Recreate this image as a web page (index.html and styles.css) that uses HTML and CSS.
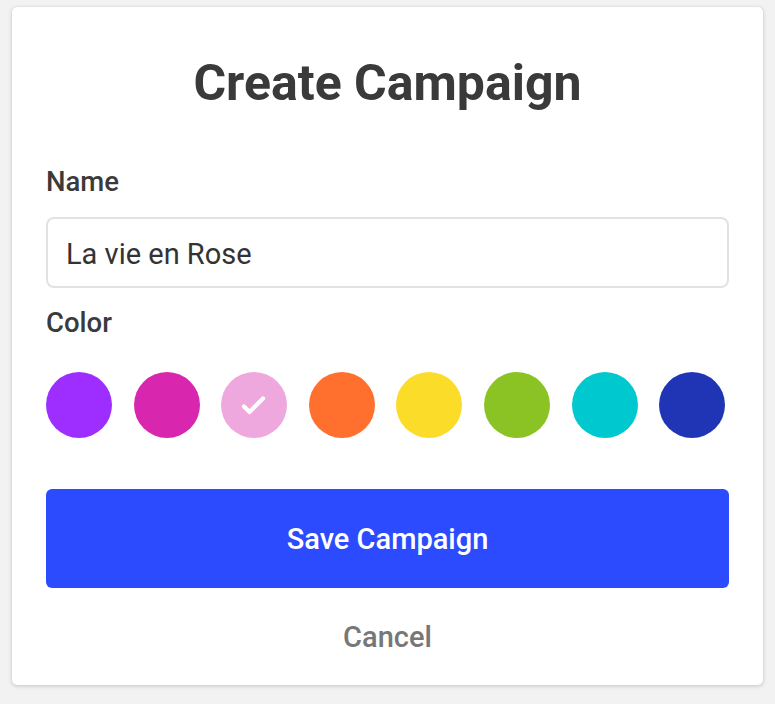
FILE: index.html
```html
<!DOCTYPE html>
<html>
<head>
<meta charset="utf-8">
<link rel="stylesheet" href="styles.css">
</head>
<body>
<div class="card">
  <h1 class="title">Create Campaign</h1>
  <label class="label label-name">Name</label>
  <div class="input">La vie en Rose</div>
  <div class="label label-color">Color</div>
  <div class="swatches">
    <span class="swatch c1"></span>
    <span class="swatch c2"></span>
    <span class="swatch c3">
      <svg class="check" width="66" height="66" viewBox="0 0 66 66"><path d="M23 34.5 L28.5 40 L42 26.5" fill="none" stroke="#fff" stroke-width="4.2" stroke-linecap="round" stroke-linejoin="round"/></svg>
    </span>
    <span class="swatch c4"></span>
    <span class="swatch c5"></span>
    <span class="swatch c6"></span>
    <span class="swatch c7"></span>
    <span class="swatch c8"></span>
  </div>
  <button class="save">Save Campaign</button>
  <div class="cancel">Cancel</div>
</div>
</body>
</html>
```

FILE: styles.css
```css
html, body {
  margin: 0;
  padding: 0;
}
body {
  background: #f2f2f2;
  font-family: Roboto, "Liberation Sans", sans-serif;
  width: 775px;
  height: 704px;
  padding: 7px 0 0 12px;
  box-sizing: border-box;
}
.card {
  width: 751px;
  height: 678px;
  box-sizing: border-box;
  background: #fff;
  border-radius: 5px;
  box-shadow: 0 1px 4px rgba(0,0,0,0.18), 0 0 1px rgba(0,0,0,0.12);
  padding: 46px 34px 0 34px;
  display: flex;
  flex-direction: column;
}
.title {
  margin: 0;
  font-size: 50px;
  line-height: 60px;
  font-weight: 700;
  color: #3a3a3a;
  text-align: center;
}
.label {
  display: block;
  font-size: 27.5px;
  line-height: 30px;
  font-weight: 500;
  color: #3a3a3a;
}
.label-name {
  margin-top: 54px;
}
.input {
  margin-top: 20px;
  height: 71px;
  box-sizing: border-box;
  border: 2px solid #e2e2e2;
  border-radius: 8px;
  padding: 0 18px;
  display: flex;
  align-items: center;
  font-size: 29px;
  color: #333;
  padding-top: 3px;
}
.label-color {
  margin-top: 20px;
}
.swatches {
  margin-top: 34px;
  display: flex;
  gap: 21.6px;
}
.swatch {
  width: 66px;
  height: 66px;
  border-radius: 50%;
  display: block;
  flex: none;
}
.check { display: block; }
.c1 { background: #9d2eff; }
.c2 { background: #d926ae; }
.c3 { background: #efa8dd; }
.c4 { background: #ff6f2e; }
.c5 { background: #fbdc29; }
.c6 { background: #8bc324; }
.c7 { background: #00c8cf; }
.c8 { background: #1f35b6; }
.save {
  margin-top: 51px;
  height: 99px;
  border: none;
  border-radius: 6px;
  background: #2c4bff;
  color: #fff;
  font-family: Roboto, "Liberation Sans", sans-serif;
  font-size: 29px;
  font-weight: 500;
  padding: 0;
  width: 100%;
}
.cancel {
  margin-top: 32px;
  text-align: center;
  font-size: 29px;
  line-height: 34px;
  font-weight: 500;
  color: #777;
}
```
